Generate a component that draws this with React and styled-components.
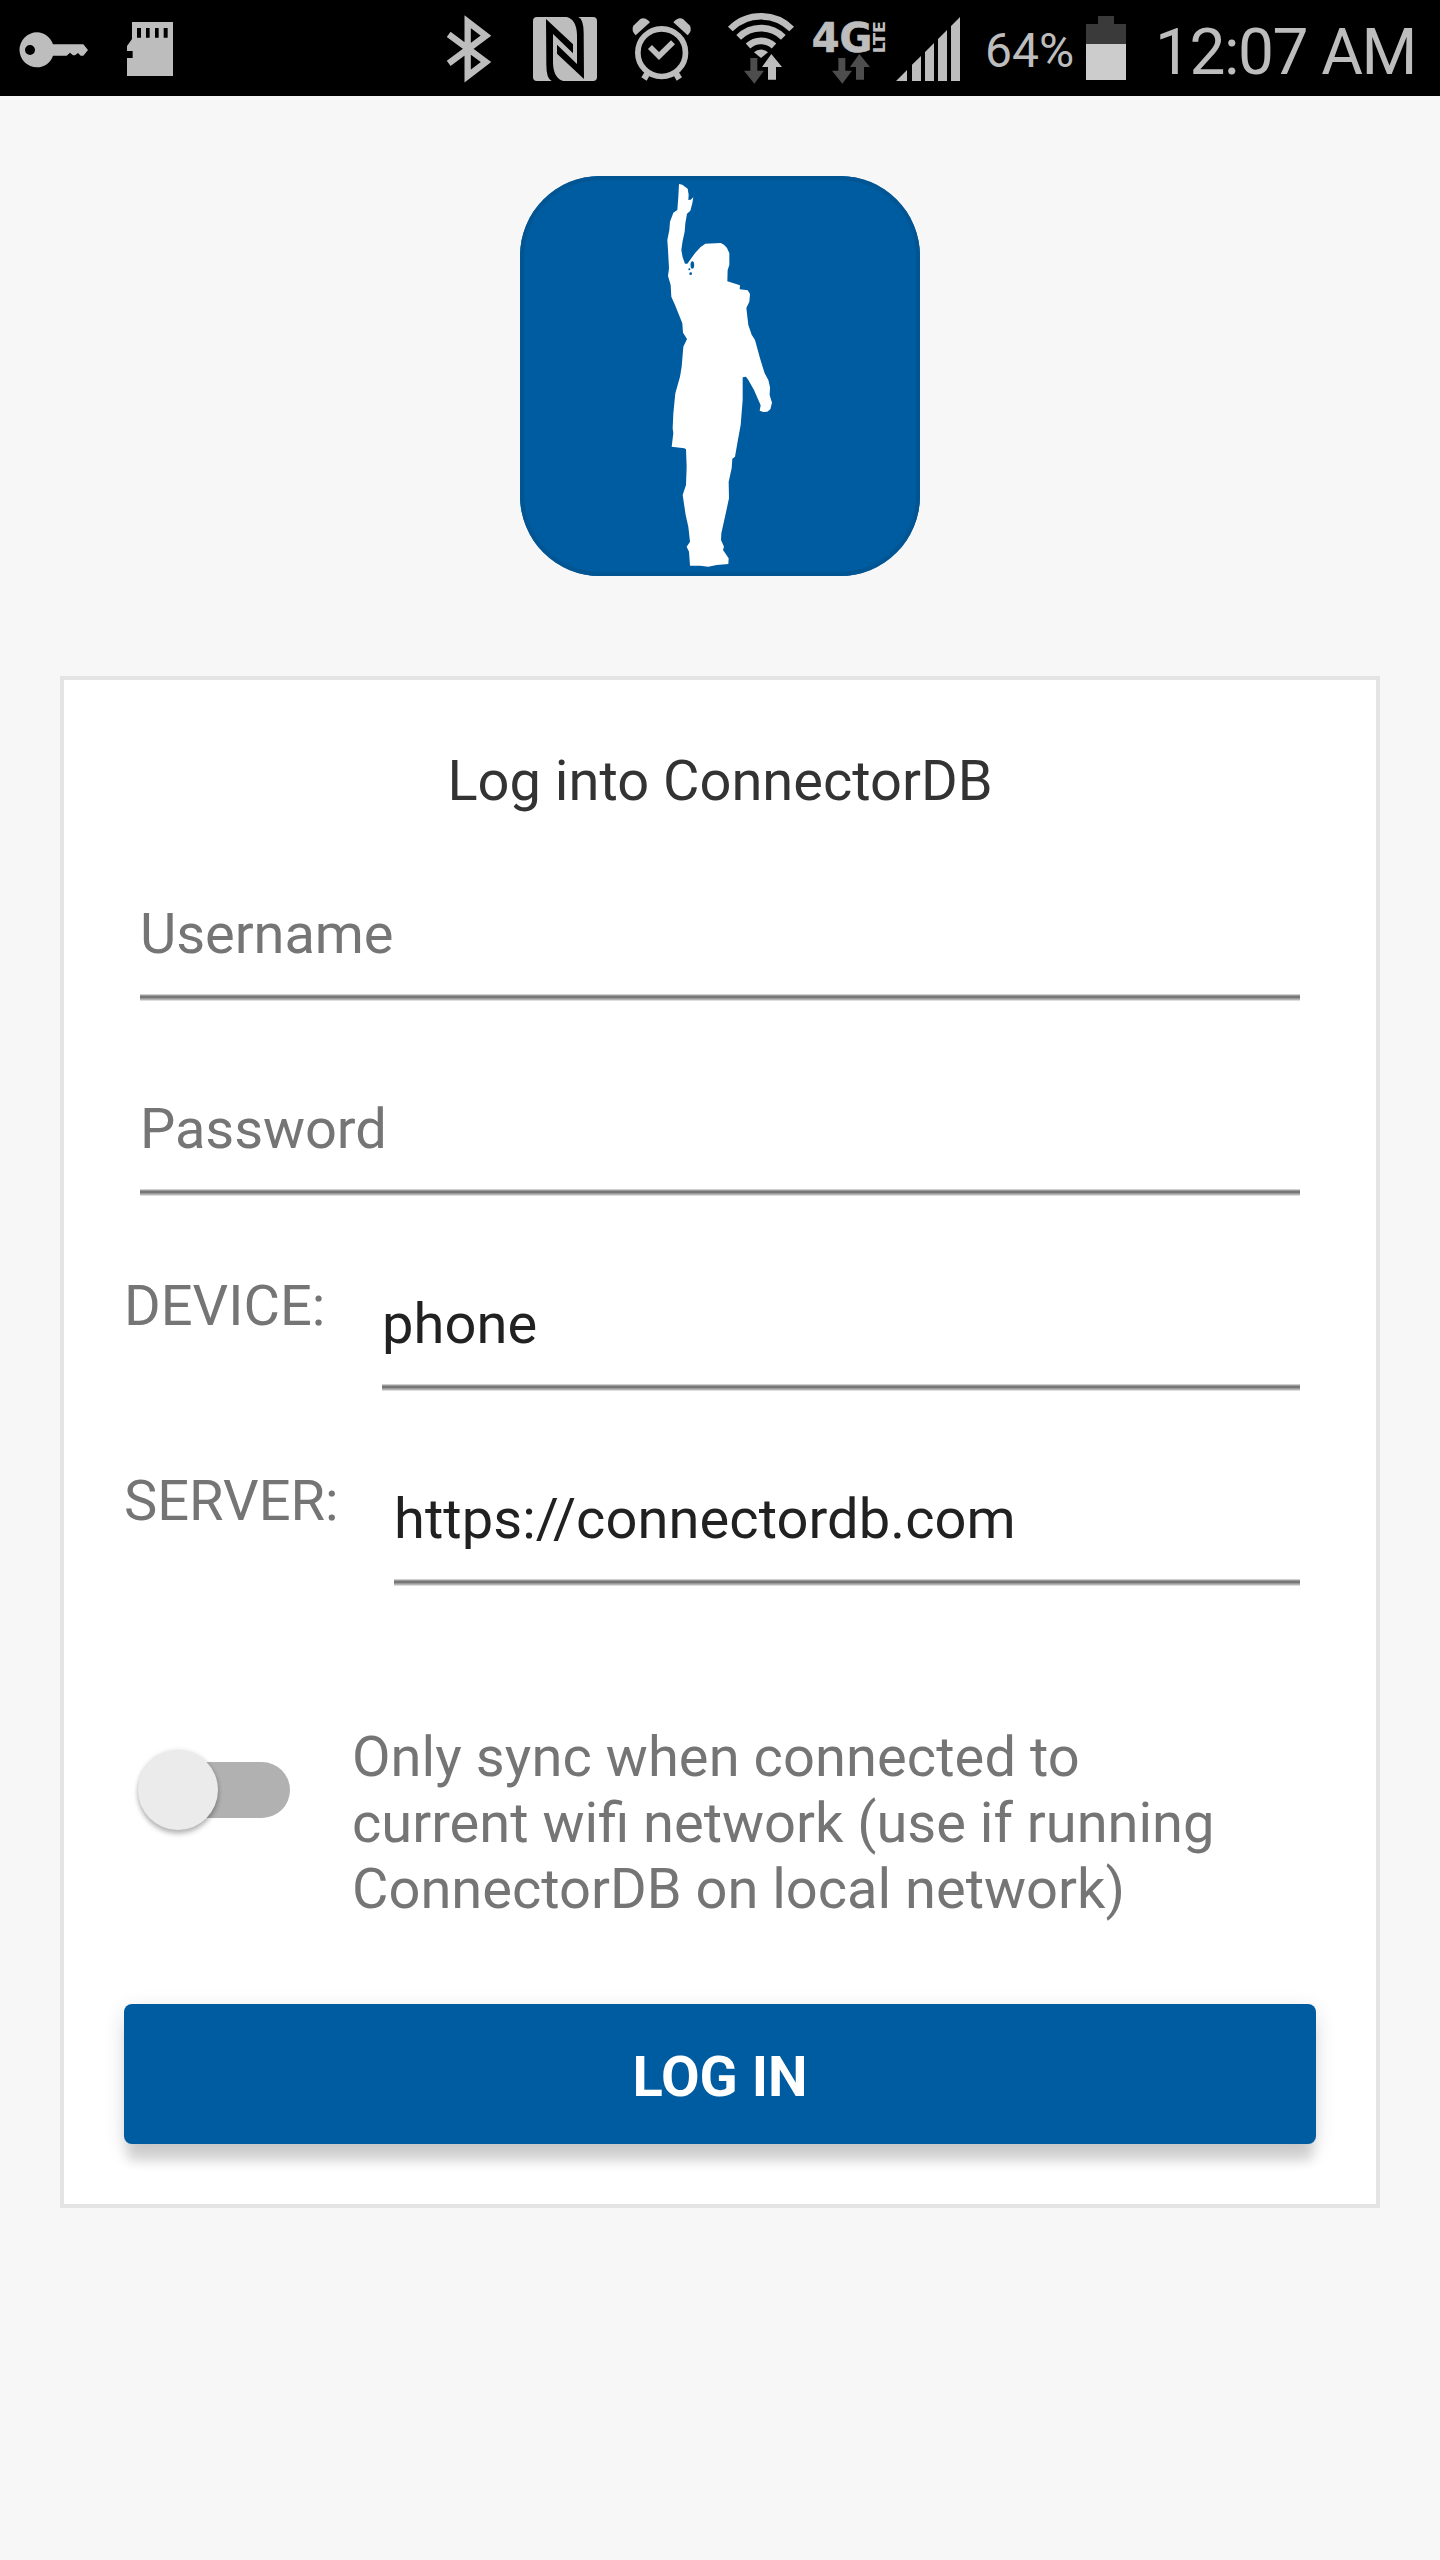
import React from "react";
import styled, { createGlobalStyle } from "styled-components";

const Global = createGlobalStyle`
  * { box-sizing: border-box; }
  body { margin: 0; background: #f7f7f7; font-family: Roboto, "Liberation Sans", sans-serif; }
`;

const Screen = styled.div`
  width: 1440px;
  height: 2560px;
  display: flex;
  flex-direction: column;
  align-items: center;
  background: #f7f7f7;
  overflow: hidden;
`;

const StatusBar = styled.header`
  width: 100%;
  height: 96px;
  flex: none;
  display: flex;
  background: #000;
  color: #bdbdbd;
`;

const StatusIcon = styled.svg`
  flex: none;
  display: block;
  width: ${(p) => p.$w}px;
  height: 96px;
  margin-left: ${(p) => p.$gap}px;
  fill: #bdbdbd;
  overflow: visible;
`;

const StatusText = styled.span`
  flex: none;
  width: ${(p) => p.$w}px;
  margin-left: ${(p) => p.$gap}px;
  padding-top: ${(p) => p.$top}px;
  font-size: ${(p) => p.$size}px;
  line-height: ${(p) => p.$line}px;
  letter-spacing: ${(p) => p.$track || 0}px;
  white-space: nowrap;
`;

const Logo = styled.div`
  flex: none;
  width: 400px;
  height: 400px;
  margin-top: 80px;
  border-radius: 80px;
  background: #005ca1;
  box-shadow: inset 0 0 0 4px #005592;
`;

const Figure = styled.svg`
  display: block;
  width: 400px;
  height: 400px;
  fill: #fff;
`;

const Card = styled.form`
  flex: none;
  width: 1320px;
  height: 1532px;
  margin: 100px 0 0;
  padding: 68px 60px 60px;
  border: 4px solid #e4e4e4;
  background: #fff;
  display: flex;
  flex-direction: column;
  font-size: 56px;
  line-height: 66px;
`;

const Title = styled.h1`
  margin: 0 0 46px;
  font-size: 56px;
  font-weight: 400;
  text-align: center;
  color: #333;
`;

const Row = styled.div`
  flex: none;
  height: 195px;
  display: flex;
`;

const Label = styled.label`
  flex: none;
  width: ${(p) => p.$w}px;
  padding-top: 23px;
  color: #757575;
`;

const Field = styled.div`
  flex: 1;
  margin: 41px 16px 0 ${(p) => (p.$inset ? 16 : 0)}px;
`;

const Input = styled.input`
  display: block;
  width: 100%;
  height: 66px;
  padding: 0;
  border: 0;
  outline: 0;
  background: transparent;
  font: inherit;
  letter-spacing: 0.08px;
  color: #212121;
  &::placeholder { color: #757575; opacity: 1; letter-spacing: -0.08px; }
`;

const Underline = styled.div`
  height: 7px;
  margin-top: 27px;
  background: linear-gradient(
    #cfcfcf 0 1px, #999 1px 2px, #777 2px 4px, #999 4px 5px, #b4b4b4 5px 6px, #dedede 6px 7px
  );
`;

const SyncRow = styled.div`
  display: flex;
  margin-top: 84px;
  height: 198px;
`;

const Track = styled.div`
  flex: none;
  width: 144px;
  height: 56px;
  margin: 38px 62px 0 22px;
  border-radius: 28px;
  background: #b1b1b1;
  display: flex;
  align-items: center;
`;

const Thumb = styled.div`
  flex: none;
  width: 80px;
  height: 80px;
  margin-left: -8px;
  border-radius: 50%;
  background: #ebebeb;
  box-shadow: 0 4px 5px rgba(0, 0, 0, 0.25), 0 0 5px rgba(0, 0, 0, 0.12);
`;

const SyncText = styled.p`
  margin: 0;
  color: #757575;
  white-space: nowrap;
  &::first-line { letter-spacing: 0.08px; }
`;

const LoginButton = styled.button`
  flex: none;
  height: 140px;
  margin-top: 82px;
  padding: 6px 0 0;
  border: 0;
  border-radius: 8px;
  background: #005ca1;
  color: #fff;
  font: 700 56px/66px Roboto, "Liberation Sans", sans-serif;
  box-shadow: 0 20px 12px -3px rgba(0, 0, 0, 0.14), 0 6px 22px rgba(0, 0, 0, 0.12);
`;

const DOWN = "M151 174H172V212H192L163 251 132 212H151Z";
const UP = "M214 162 246 201H228V239H204V201H186Z";
const NFC_BAND =
  "M378 57 459 133V160L399 102V190Q401 236 430 243V246H395V243Q379 236 379 195Z";
const BELL = "M647 106 690 67Q675 50 661 57L640 77Q633 91 647 106Z";
const FOOT = "M674 216 690 224 680 242 664 232Z";

const FIGURE =
  "M177 42 187 44 203 56 206 74 205 90 212 89 220 82 217 100 211 122 201 131 196 160 194 185 188 212 184 240 188 262 195 281 202 281 226 248 242 231 256 221 302 219 312 224 321 234 328 250 328 285 323 300 322 334 360 346 359 358 383 361 390 372 388 395 379 414 385 465 395 494 405 510 420 565 434 610 445 630 450 652 449 675 456 698 451 718 442 725 430 726 419 722 422 706 402 660 385 630 378 620 368 622 368 690 362 765 352 820 345 860 337 866 335 895 326 935 327 985 315 1040 304 1090 303 1110 312 1130 309 1140 326 1165 325 1182 290 1185 265 1190 240 1187 210 1187 207 1145 200 1130 210 1115 205 1070 197 1035 188 975 198 945 200 890 198 838 193 835 155 830 160 790 158 775 160 730 166 670 180 620 185 590 190 530 201 507 189 488 187 460 165 405 154 380 152 345 144 318 147 295 144 240 142 210 148 180 150 155 160 128 172 120 175 80Z";

function TextField({ label, labelWidth, ...input }) {
  return (
    <Row>
      {label && <Label $w={labelWidth}>{label}</Label>}
      <Field $inset={!label}>
        <Input {...input} />
        <Underline />
      </Field>
    </Row>
  );
}

export default function App() {
  return (
    <Screen>
      <Global />
      <StatusBar>
        <StatusIcon $w={68} $gap={20} viewBox="60 0 204 288">
          <path
            fillRule="evenodd"
            d="M111 97C133 97 152 112 159 133H250L264 150 250 167H242L234 159 225 166H219L210 158 200 167H159C152 188 133 202 111 202A52 52 0 0 1 111 97ZM90 135A15 15 0 1 0 90 165A15 15 0 1 0 90 135Z"
          />
        </StatusIcon>
        <StatusIcon $w={48} $gap={38} viewBox="378 0 144 288">
          <path
            fillRule="evenodd"
            d="M396 66H519V228H381V174H398V153H381V138L396 117ZM411 84V113H423V84ZM438 84V113H449V84ZM465 84V113H476V84ZM491 84V113H503V84Z"
          />
        </StatusIcon>
        <StatusIcon $w={46} $gap={272} viewBox="78 0 138 288">
          <path
            d="M86 190 198 107 143 65V228L198 186 86 103"
            fill="none"
            stroke="#bdbdbd"
            strokeWidth="19"
            strokeMiterlimit="8"
          />
        </StatusIcon>
        <StatusIcon $w={66} $gap={40} viewBox="336 0 198 288">
          <rect x="339" y="51" width="192" height="192" rx="12" />
          <path d={NFC_BAND} fill="#000" />
          <path d={NFC_BAND} fill="#000" transform="rotate(180 435 147)" />
        </StatusIcon>
        <StatusIcon $w={60} $gap={34} viewBox="636 0 180 288">
          <circle cx="725" cy="158" r="71.5" fill="none" stroke="#bdbdbd" strokeWidth="17" />
          <path d="M690 141 717 168 759 127" fill="none" stroke="#bdbdbd" strokeWidth="17" />
          <path d={BELL} />
          <path d={FOOT} />
          <g transform="translate(1450 0) scale(-1 1)">
            <path d={BELL} />
            <path d={FOOT} />
          </g>
        </StatusIcon>
        <StatusIcon $w={68} $gap={35} viewBox="81 0 204 288">
          <g fill="none" stroke="#bdbdbd" strokeWidth="20">
            <path d="M91 87A130 130 0 0 1 275 87" />
            <path d="M116 112A94.5 94.5 0 0 1 250 112" />
            <path d="M144 138A57 57 0 0 1 222 138" />
          </g>
          <path d="M162 157A31 31 0 0 1 204 157L183 174Z" />
          <path d={DOWN} fill="#4d4d4d" />
          <path d={UP} stroke="#000" strokeWidth="10" paintOrder="stroke" />
        </StatusIcon>
        <StatusIcon $w={74} $gap={17} viewBox="336 0 222 288">
          <text
            x="335" y="156" fontSize="123" fontWeight="700" fontFamily="DejaVu Sans"
            stroke="#bdbdbd" strokeWidth="2"
            textLength="182" lengthAdjust="spacingAndGlyphs"
          >
            4G
          </text>
          <text
            transform="translate(555 160) rotate(-90)" fontSize="48" fontWeight="700"
            fontFamily="DejaVu Sans" textLength="97" lengthAdjust="spacingAndGlyphs"
          >
            LTE
          </text>
          <g transform="translate(264 0)" fill="#4d4d4d">
            <path d={DOWN} />
            <path d={UP} />
          </g>
        </StatusIcon>
        <StatusIcon $w={66} $gap={9} viewBox="585 0 198 288">
          <path d="M588 243 621 210V243ZM636 243V194L663 168V243ZM675 243V156L702 129V243ZM714 243V117L741 90V243ZM753 243V78L780 51V243Z" />
        </StatusIcon>
        <StatusText $w={90} $gap={24} $top={23} $size={48} $line={56}>64%</StatusText>
        <StatusIcon $w={40} $gap={11} viewBox="378 0 120 288">
          <path d="M414 48H462V72H498V132H378V72H414Z" fill="#3a3a3a" />
          <rect x="378" y="132" width="120" height="108" fill="#ccc" />
        </StatusIcon>
        <StatusText $w={270} $gap={29} $top={15} $size={64} $line={75} $track={-1.5}>
          12:07 AM
        </StatusText>
      </StatusBar>

      <Logo>
        <Figure viewBox="-300 18 1200 1200">
          <path d={FIGURE} strokeLinejoin="round" />
          <g fill="#005ca1">
            <ellipse cx="217" cy="285" rx="5.5" ry="11" />
            <circle cx="208" cy="298" r="3" />
            <circle cx="212" cy="311" r="4" />
          </g>
        </Figure>
      </Logo>

      <Card onSubmit={(e) => e.preventDefault()}>
        <Title>Log into ConnectorDB</Title>
        <TextField placeholder="Username" />
        <TextField placeholder="Password" type="password" />
        <TextField label="DEVICE:" labelWidth={258} defaultValue="phone" />
        <TextField label="SERVER:" labelWidth={270} defaultValue="https://connectordb.com" />
        <SyncRow>
          <Track>
            <Thumb />
          </Track>
          <SyncText>
            Only sync when connected to
            <br />
            current wifi network (use if running
            <br />
            ConnectorDB on local network)
          </SyncText>
        </SyncRow>
        <LoginButton>LOG IN</LoginButton>
      </Card>
    </Screen>
  );
}
